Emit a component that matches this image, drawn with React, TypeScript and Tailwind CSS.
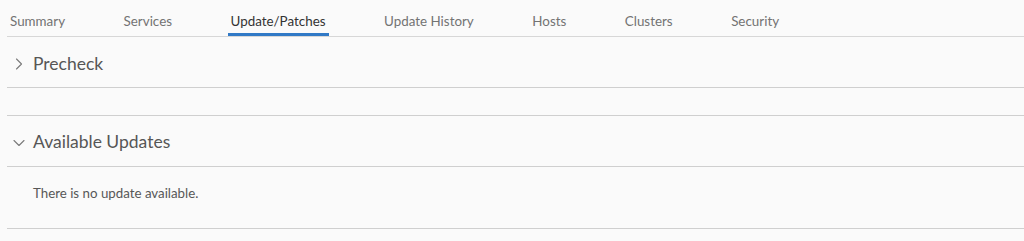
import { ChevronRight, ChevronDown } from 'lucide-react'

const tabs = ['Summary', 'Services', 'Update/Patches', 'Update History', 'Hosts', 'Clusters', 'Security']

export default function App() {
  return (
    <div className="min-h-screen bg-[#fafafa] pl-[7px] text-[#565656]" style={{ fontFamily: 'Lato, "Noto Sans", sans-serif' }}>
      {/* Tabs */}
      <nav className="flex h-[37px] gap-[52.5px] border-b border-[#d7d7d7]">
        {tabs.map((t) => {
          const active = t === 'Update/Patches'
          return (
            <button
              key={t}
              className={
                active
                  ? 'flex h-full items-center border-b-[3px] border-[#3179c6] px-[3px] pt-[10px] text-[13.4px] text-[#333]'
                  : 'flex h-full items-center border-b-[3px] border-transparent px-[3px] pt-[10px] text-[13.4px] text-[#737373]'
              }
            >
              {t}
            </button>
          )
        })}
      </nav>

      {/* Precheck */}
      <div className="flex h-[51px] items-center gap-[4px] border-b border-[#cfcfcf] pl-[2px] pt-[4px]">
        <ChevronRight className="h-[20px] w-[20px] text-[#7a7a7a]" strokeWidth={1.3} />
        <span className="text-[17.5px]">Precheck</span>
      </div>
      <div className="h-[28px] border-b border-[#cfcfcf]" />

      {/* Available Updates */}
      <div className="flex h-[51px] items-center gap-[4px] border-b border-[#cfcfcf] pl-[2px] pt-[3px]">
        <ChevronDown className="h-[20px] w-[20px] text-[#7a7a7a]" strokeWidth={1.3} />
        <span className="text-[17.5px]">Available Updates</span>
      </div>
      <div className="h-[62px] border-b border-[#cfcfcf] pl-[26px] pt-[17px] text-[13.3px] text-[#575757]">
        There is no update available.
      </div>
    </div>
  )
}
